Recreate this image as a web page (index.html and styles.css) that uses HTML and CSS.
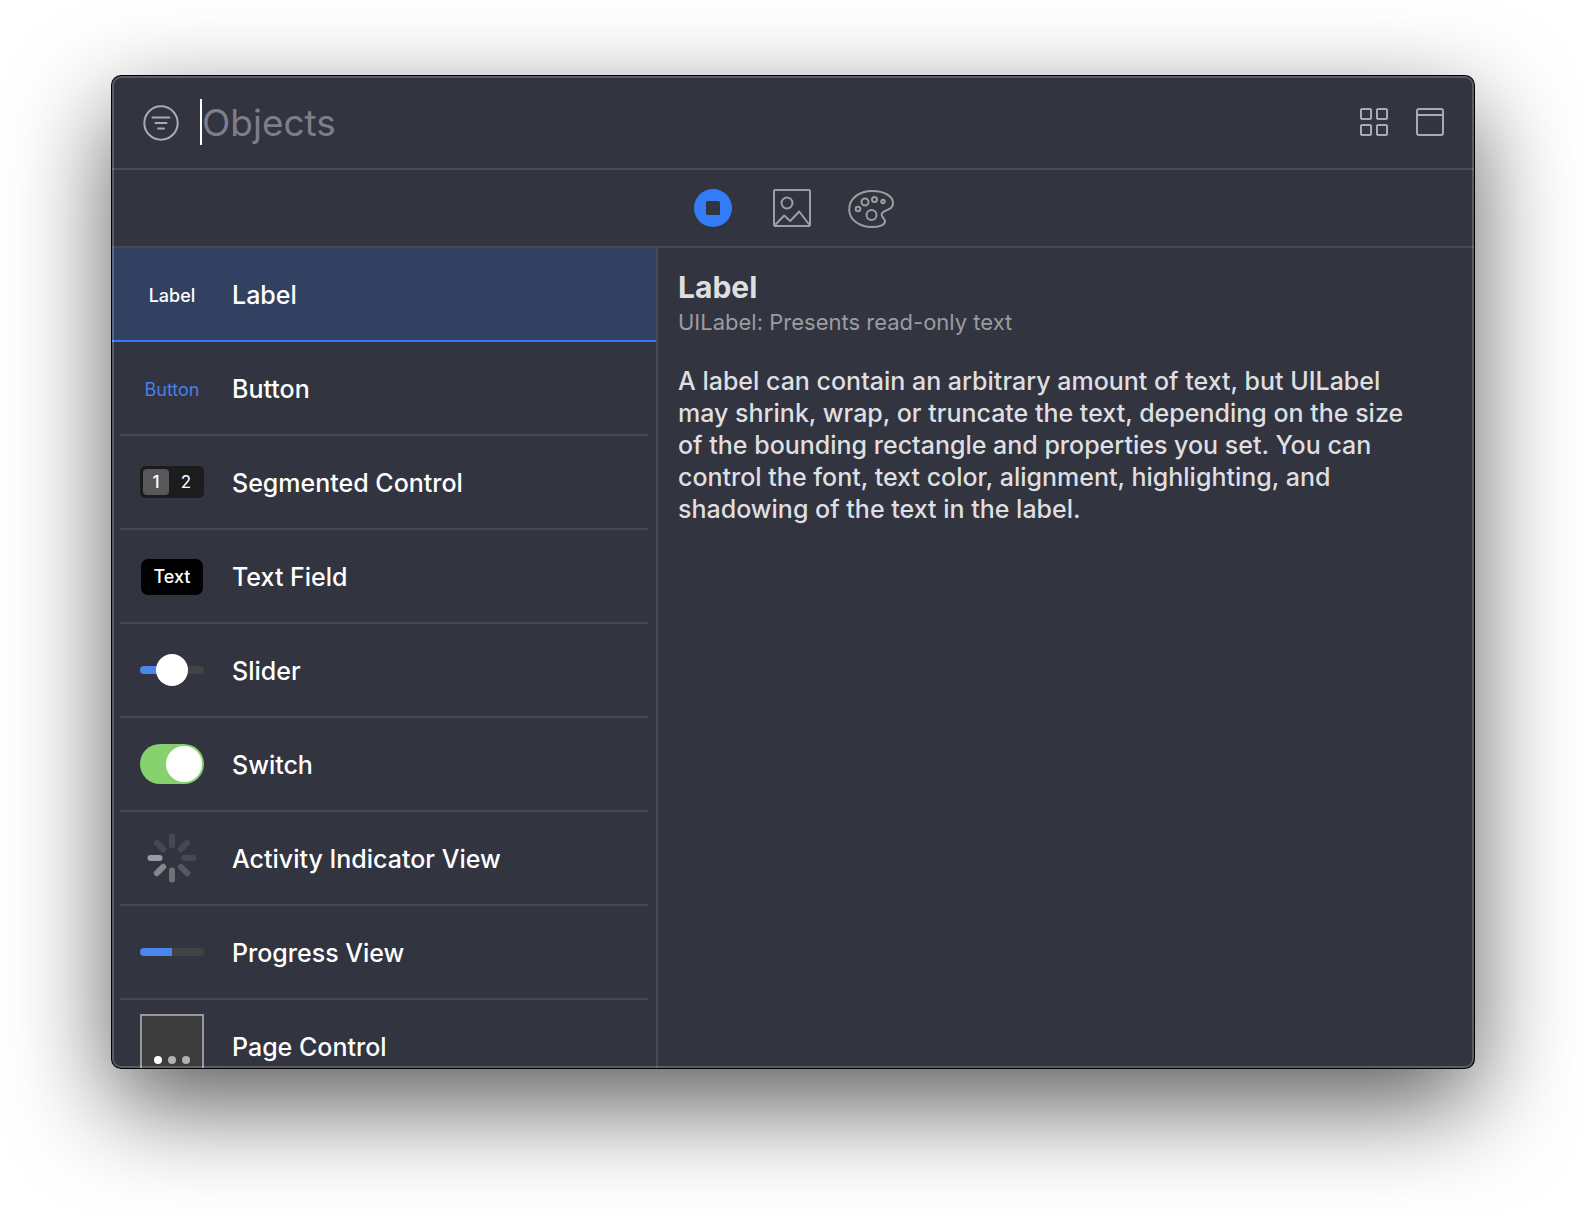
FILE: index.html
```
<!DOCTYPE html>
<html lang="en">
<head>
    <meta charset="utf-8">
    <meta name="viewport" content="width=device-width, initial-scale=1.0">
    <link rel="stylesheet" href="styles.css">
    <title>Library</title>
</head>
<body>
    <main class="library">
        <header class="search-bar">
            <button type="button" class="icon-button" aria-label="Filter">
                <svg width="38" height="38" viewBox="0 0 38 38" fill="none" stroke="#a9aab4" stroke-width="2" stroke-linecap="round">
                    <circle cx="19" cy="20" r="16.7"/>
                    <path d="M10.5 14.5h17M13.5 20h11M16.2 25.5h5.8"/>
                </svg>
            </button>
            <input type="text" class="search-input" placeholder="Objects" aria-label="Search objects">
            <button type="button" class="icon-button" aria-label="Grid view">
                <svg width="28" height="28" viewBox="0 0 28 28" fill="none" stroke="#a9aab4" stroke-width="2">
                    <rect x="1" y="1" width="10" height="10" rx="1"/>
                    <rect x="17" y="1" width="10" height="10" rx="1"/>
                    <rect x="1" y="17" width="10" height="10" rx="1"/>
                    <rect x="17" y="17" width="10" height="10" rx="1"/>
                </svg>
            </button>
            <button type="button" class="icon-button" aria-label="Show details">
                <svg width="28" height="28" viewBox="0 0 28 28" fill="none" stroke="#a9aab4" stroke-width="2">
                    <rect x="1" y="1" width="26" height="26" rx="2"/>
                    <path d="M1 7h26"/>
                </svg>
            </button>
        </header>

        <nav class="tabs">
            <button type="button" class="tab" aria-label="Objects">
                <svg width="38" height="38" viewBox="0 0 38 38">
                    <circle cx="19" cy="19" r="19" fill="#327cf7"/>
                    <rect x="12" y="12" width="14" height="14" rx="1.5" fill="#32343f"/>
                </svg>
            </button>
            <button type="button" class="tab" aria-label="Media">
                <svg width="38" height="38" viewBox="0 0 38 38" fill="none" stroke="#9d9ea2" stroke-width="2" stroke-linejoin="round">
                    <rect x="1" y="1" width="36" height="36" rx="1"/>
                    <circle cx="14" cy="14" r="5.5"/>
                    <path d="M2 36l9.2-9.5 6 5.5 9-9.5L36.5 36"/>
                </svg>
            </button>
            <button type="button" class="tab" aria-label="Colors">
                <svg width="46" height="40" viewBox="0 0 46 40" fill="none" stroke="#9d9ea2" stroke-width="2">
                    <path d="M24.5 3C36 3 45 8 45 15C45 20 41.5 21 38 22.5C34.5 24 33 25.500 33.800 27.500C34.500 29.500 37 31 37 33.500C37 37 31 39 24 39C11 39 1.200 31.500 1.200 21.500C1.200 10.500 11 3 24.500 3Z"/>
                    <circle cx="10" cy="21" r="2.300"/>
                    <circle cx="17" cy="14" r="3.500"/>
                    <circle cx="26.500" cy="11.500" r="2.500"/>
                    <circle cx="35" cy="13.500" r="1.700"/>
                    <circle cx="23.500" cy="27" r="5"/>
                </svg>
            </button>
        </nav>

        <div class="content">
            <ul class="object-list">
                <li>
                    <button type="button" class="object selected">
                        <span class="thumb thumb-text">Label</span>
                        <span class="name">Label</span>
                    </button>
                </li>
                <li>
                    <button type="button" class="object">
                        <span class="thumb thumb-text thumb-button">Button</span>
                        <span class="name">Button</span>
                    </button>
                </li>
                <li>
                    <button type="button" class="object">
                        <span class="thumb">
                            <span class="segments"><span class="segment on">1</span><span class="segment">2</span></span>
                        </span>
                        <span class="name">Segmented Control</span>
                    </button>
                </li>
                <li>
                    <button type="button" class="object">
                        <span class="thumb thumb-text"><span class="text-box">Text</span></span>
                        <span class="name">Text Field</span>
                    </button>
                </li>
                <li>
                    <button type="button" class="object">
                        <svg class="thumb" width="64" height="32" viewBox="0 0 64 32">
                            <rect x="0" y="12" width="64" height="8" rx="4" fill="#434343"/>
                            <path d="M4 12h28v8H4a4 4 0 0 1 0-8z" fill="#4a86ee"/>
                            <circle cx="32" cy="16" r="16" fill="#fff"/>
                        </svg>
                        <span class="name">Slider</span>
                    </button>
                </li>
                <li>
                    <button type="button" class="object">
                        <svg class="thumb" width="64" height="40" viewBox="0 0 64 40">
                            <rect width="64" height="40" rx="20" fill="#86d16d"/>
                            <circle cx="44" cy="20" r="18" fill="#fff"/>
                        </svg>
                        <span class="name">Switch</span>
                    </button>
                </li>
                <li>
                    <button type="button" class="object">
                        <svg class="thumb" width="64" height="50" viewBox="-32 -25 64 50" stroke-width="6" stroke-linecap="round">
                            <path d="M0 -12.500V-21.500" stroke="#464853"/>
                            <path d="M0 -12.500V-21.500" stroke="#464853" transform="rotate(45)"/>
                            <path d="M0 -12.500V-21.500" stroke="#464853" transform="rotate(90)"/>
                            <path d="M0 -12.500V-21.500" stroke="#565862" transform="rotate(135)"/>
                            <path d="M0 -12.500V-21.500" stroke="#70727a" transform="rotate(180)"/>
                            <path d="M0 -12.500V-21.500" stroke="#868789" transform="rotate(225)"/>
                            <path d="M0 -12.500V-21.500" stroke="#9b9ca2" transform="rotate(270)"/>
                            <path d="M0 -12.500V-21.500" stroke="#464853" transform="rotate(315)"/>
                        </svg>
                        <span class="name">Activity Indicator View</span>
                    </button>
                </li>
                <li>
                    <button type="button" class="object">
                        <svg class="thumb" width="64" height="8" viewBox="0 0 64 8">
                            <rect width="64" height="8" rx="4" fill="#434343"/>
                            <path d="M4 0h28v8H4a4 4 0 0 1 0-8z" fill="#4a86ee"/>
                        </svg>
                        <span class="name">Progress View</span>
                    </button>
                </li>
                <li>
                    <button type="button" class="object">
                        <svg class="thumb" width="64" height="64" viewBox="0 0 64 64">
                            <rect x="1" y="1" width="62" height="62" fill="#3c3c3d" stroke="#98989d" stroke-width="2"/>
                            <circle cx="18" cy="46" r="4" fill="#fff"/>
                            <circle cx="32" cy="46" r="4" fill="#b1b1b1"/>
                            <circle cx="46" cy="46" r="4" fill="#b1b1b1"/>
                        </svg>
                        <span class="name">Page Control</span>
                    </button>
                </li>
            </ul>

            <section class="details">
                <h1>Label</h1>
                <p class="summary">UILabel: Presents read-only text</p>
                <p class="description">A label can contain an arbitrary amount of text, but UILabel may shrink, wrap, or truncate the text, depending on the size of the bounding rectangle and properties you set. You can control the font, text color, alignment, highlighting, and shadowing of the text in the label.</p>
            </section>
        </div>
    </main>
</body>
</html>
```
FILE: styles.css
```
* {
    box-sizing: border-box;
}

body {
    margin: 0;
    height: 100vh;
    padding: 76px 112px 148px;
    overflow: hidden;
    background-color: white;
    font-family: Inter, "Liberation Sans", sans-serif;
}

button {
    padding: 0;
    border: none;
    background: none;
    color: inherit;
    font: inherit;
    cursor: pointer;
}

svg {
    display: block;
    flex: none;
}

/* The floating window */
.library {
    position: relative;
    display: flex;
    flex-direction: column;
    height: 100%;
    overflow: hidden;
    border-radius: 9px;
    background-color: #32343f;
    color: white;
    box-shadow: 0 0 0 1px black, 0 36px 100px rgba(0, 0, 0, 0.65);
}

/* Light inner edge, drawn over the rows */
.library::after {
    content: "";
    position: absolute;
    inset: 0;
    border: 2px solid rgba(255, 255, 255, 0.2);
    border-radius: 9px;
    pointer-events: none;
}

/* Search bar */
.search-bar {
    display: flex;
    align-items: center;
    gap: 28px;
    height: 94px;
    flex: none;
    padding: 0 30px;
    border-bottom: 2px solid #4a4b57;
}

.search-input {
    flex: 1;
    min-width: 0;
    height: 46px;
    margin-left: -8px;
    padding: 0;
    border: none;
    border-left: 2px solid white;
    outline: none;
    background: none;
    color: white;
    font: 400 37px Inter, "Liberation Sans", sans-serif;
}

.search-input::placeholder {
    color: #7d7e89;
}

/* Library tabs */
.tabs {
    display: flex;
    justify-content: center;
    align-items: center;
    gap: 33px;
    height: 78px;
    flex: none;
    padding-right: 2px;
    border-bottom: 2px solid #484852;
}

.tab {
    display: flex;
    justify-content: center;
    width: 46px;
}

.content {
    display: flex;
    flex: 1;
    min-height: 0;
}

/* Object list */
.object-list {
    width: 546px;
    flex: none;
    margin: 0;
    padding: 0;
    overflow: hidden;
    list-style: none;
    border-right: 2px solid #484852;
}

.object {
    position: relative;
    display: flex;
    align-items: center;
    gap: 28px;
    width: 100%;
    height: 94px;
    padding: 0 28px 2px;
    font-size: 25px;
    font-weight: 500;
    text-align: left;
}

.object::after {
    content: "";
    position: absolute;
    left: 8px;
    right: 8px;
    bottom: 0;
    height: 2px;
    background-color: #454753;
}

.object.selected {
    background-color: #324161;
}

.object.selected::after {
    left: 0;
    right: 0;
    background-color: #327cf7;
}

.name {
    padding-top: 2px;
}

.thumb {
    display: flex;
    justify-content: center;
    align-items: center;
    width: 64px;
    flex: none;
    font-size: 17px;
}

.thumb-text {
    padding-top: 2px;
    font-size: 18px;
}

.thumb-button {
    color: #4a7fe8;
    font-weight: 400;
}

.segments {
    display: flex;
    width: 64px;
    height: 32px;
    padding: 3px 5px 3px 3px;
    gap: 4px;
    border-radius: 5px;
    background-color: #1c1c1d;
}

.segment {
    display: flex;
    justify-content: center;
    align-items: center;
    flex: 1;
    border-radius: 4px;
    font-weight: 400;
}

.segment.on {
    background-color: #58585a;
    font-weight: 500;
}

.text-box {
    width: 62px;
    border-radius: 7px;
    background-color: black;
    line-height: 36px;
    text-align: center;
}

/* Details of the selected object */
.details {
    flex: 1;
    padding: 23px 56px 24px 20px;
    color: #dfdfe1;
}

.details h1 {
    margin: 0;
    font-size: 30px;
    line-height: 32px;
}

.summary {
    margin: 5px 0 29px;
    color: #9b9ca1;
    font-size: 22px;
    line-height: 28px;
}

.description {
    margin: 0;
    font-size: 25px;
    font-weight: 500;
    line-height: 32px;
}
```
